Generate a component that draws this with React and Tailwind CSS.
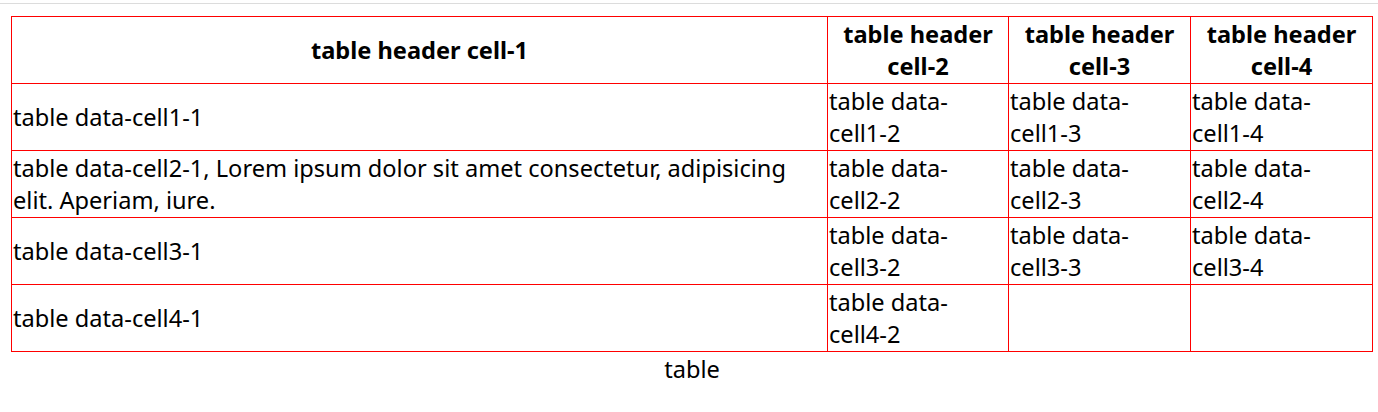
import React from 'react';

const rows = [
  ['table data-cell1-1', 'table data-cell1-2', 'table data-cell1-3', 'table data-cell1-4'],
  [
    'table data-cell2-1, Lorem ipsum dolor sit amet consectetur, adipisicing elit. Aperiam, iure.',
    'table data-cell2-2',
    'table data-cell2-3',
    'table data-cell2-4',
  ],
  ['table data-cell3-1', 'table data-cell3-2', 'table data-cell3-3', 'table data-cell3-4'],
  ['table data-cell4-1', 'table data-cell4-2', '', ''],
];

// keep "cellN-M" together so the line breaks after "data-"
function CellText({ text }) {
  const parts = text.split(/(cell\d-\d)/);
  return parts.map((p, i) =>
    /^cell\d-\d$/.test(p) ? (
      <span key={i} className="whitespace-nowrap">{p}</span>
    ) : (
      p
    )
  );
}

export default function App() {
  return (
    <div
      className="w-[1378px] h-[412px] bg-white text-black overflow-hidden"
      style={{ fontFamily: '"Noto Sans", "Noto Sans CJK KR", sans-serif' }}
    >
      <div className="h-[3px]" />
      <div className="h-px bg-[#dcdcdc]" />
      <div className="pt-3 pl-[11px]">
        <table className="table-fixed border-collapse w-[1362px] text-[23.6px] leading-[32px]">
          <caption className="caption-bottom text-center pt-[1px]">table</caption>
          <colgroup>
            <col className="w-[816px]" />
            <col className="w-[181px]" />
            <col className="w-[182px]" />
            <col className="w-[182px]" />
          </colgroup>
          <thead>
            <tr className="h-[67px]">
              {['table header cell-1', 'table header cell-2', 'table header cell-3', 'table header cell-4'].map((h) => (
                <th key={h} className="border border-[#ff0000] p-px font-bold text-center align-middle">
                  {h}
                </th>
              ))}
            </tr>
          </thead>
          <tbody>
            {rows.map((r, i) => (
              <tr key={i} className="h-[67px]">
                {r.map((c, j) => (
                  <td key={j} className="border border-[#ff0000] p-px align-middle text-left">
                    <CellText text={c} />
                  </td>
                ))}
              </tr>
            ))}
          </tbody>
        </table>
      </div>
    </div>
  );
}
